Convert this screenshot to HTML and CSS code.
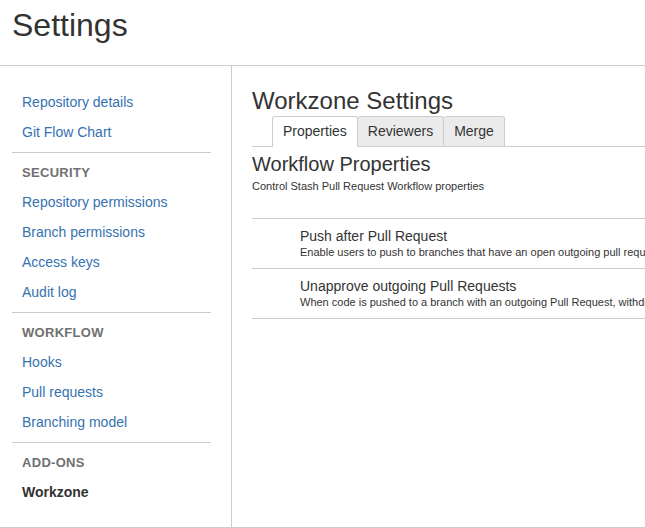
FILE: index.html
```html
<!DOCTYPE html>
<html lang="en">
<head>
    <meta charset="UTF-8">
    <meta name="viewport" content="width=device-width, initial-scale=1.0">
    <title>Settings</title>
    <link rel="stylesheet" href="styles.css">
</head>
<body>

    <header class="page-header">
        <h1>Settings</h1>
    </header>

    <div class="layout">
        <nav class="sidebar">
            <ul class="nav-group">
                <li><a href="#">Repository details</a></li>
                <li><a href="#">Git Flow Chart</a></li>
            </ul>
            <div class="nav-heading">Security</div>
            <ul class="nav-group">
                <li><a href="#">Repository permissions</a></li>
                <li><a href="#">Branch permissions</a></li>
                <li><a href="#">Access keys</a></li>
                <li><a href="#">Audit log</a></li>
            </ul>
            <div class="nav-heading">Workflow</div>
            <ul class="nav-group">
                <li><a href="#">Hooks</a></li>
                <li><a href="#">Pull requests</a></li>
                <li><a href="#">Branching model</a></li>
            </ul>
            <div class="nav-heading">Add-ons</div>
            <ul class="nav-group last">
                <li><a href="#" class="selected">Workzone</a></li>
            </ul>
        </nav>

        <main class="content">
            <h2>Workzone Settings</h2>
            <ul class="tabs">
                <li class="tab active">Properties</li>
                <li class="tab">Reviewers</li>
                <li class="tab">Merge</li>
            </ul>

            <h3>Workflow Properties</h3>
            <p class="intro">Control Stash Pull Request Workflow properties</p>

            <div class="props">
                <div class="prop">
                    <div class="prop-title">Push after Pull Request</div>
                    <div class="prop-desc">Enable users to push to branches that have an open outgoing pull request</div>
                </div>
                <div class="prop">
                    <div class="prop-title">Unapprove outgoing Pull Requests</div>
                    <div class="prop-desc">When code is pushed to a branch with an outgoing Pull Request, withdraw all approvals</div>
                </div>
            </div>
        </main>
    </div>

</body>
</html>
```

FILE: styles.css
```css
body {
    font-family: "Liberation Sans", Arial, sans-serif;
    color: #333;
    background: #fff;
    margin: 0;
    overflow: hidden;
}

ul {
    list-style: none;
    margin: 0;
    padding: 0;
}

a {
    color: #3572b0;
    text-decoration: none;
}

.page-header {
    height: 66px;
    padding: 4px 12px 0;
    box-sizing: border-box;
    border-bottom: 1px solid #ccc;
}

.page-header h1 {
    margin: 0;
    font-size: 32px;
    font-weight: normal;
    line-height: 42px;
}

.layout {
    display: flex;
    height: 461px;
    border-bottom: 1px solid #ccc;
}

.sidebar {
    width: 232px;
    flex-shrink: 0;
    box-sizing: border-box;
    padding: 21px 20px 0 12px;
    border-right: 1px solid #ccc;
}

.nav-group {
    border-bottom: 1px solid #ccc;
    padding-bottom: 5px;
    margin-bottom: 4px;
}

.nav-group.last {
    border-bottom: none;
}

.nav-group li,
.nav-heading {
    line-height: 30px;
    padding-left: 10px;
    font-size: 14px;
}

.nav-heading {
    font-size: 13px;
    font-weight: bold;
    color: #707070;
    text-transform: uppercase;
    letter-spacing: 0.3px;
    padding-top: 2px;
    line-height: 28px;
}

.nav-group a.selected {
    color: #333;
    font-weight: bold;
}

.content {
    flex: 1;
    min-width: 0;
    padding: 20px 0 0 20px;
    white-space: nowrap;
    overflow: hidden;
}

.content h2 {
    margin: 0;
    font-size: 24px;
    font-weight: normal;
    line-height: 30px;
}

.tabs {
    display: flex;
    padding-left: 20px;
    border-bottom: 1px solid #ccc;
    height: 30px;
}

.tab {
    padding: 0 10px;
    line-height: 29px;
    font-size: 14px;
    background: #ebebeb;
    border: 1px solid #ccc;
    border-bottom: none;
    border-left: none;
    border-radius: 3px 3px 0 0;
}

.tab:first-child {
    border-left: 1px solid #ccc;
}

.tab.active {
    background: #fff;
    height: 30px;
}

.content h3 {
    margin: 0;
    font-size: 20px;
    font-weight: normal;
    line-height: 32px;
    padding-top: 1px;
}

.intro {
    margin: 0 0 26px;
    font-size: 11px;
    line-height: 12px;
}

.props {
    border-top: 1px solid #ccc;
}

.prop {
    padding: 8px 0 9px 48px;
    border-bottom: 1px solid #ccc;
}

.prop-title {
    font-size: 14px;
    line-height: 18px;
}

.prop-desc {
    font-size: 11px;
    line-height: 14px;
}
```
